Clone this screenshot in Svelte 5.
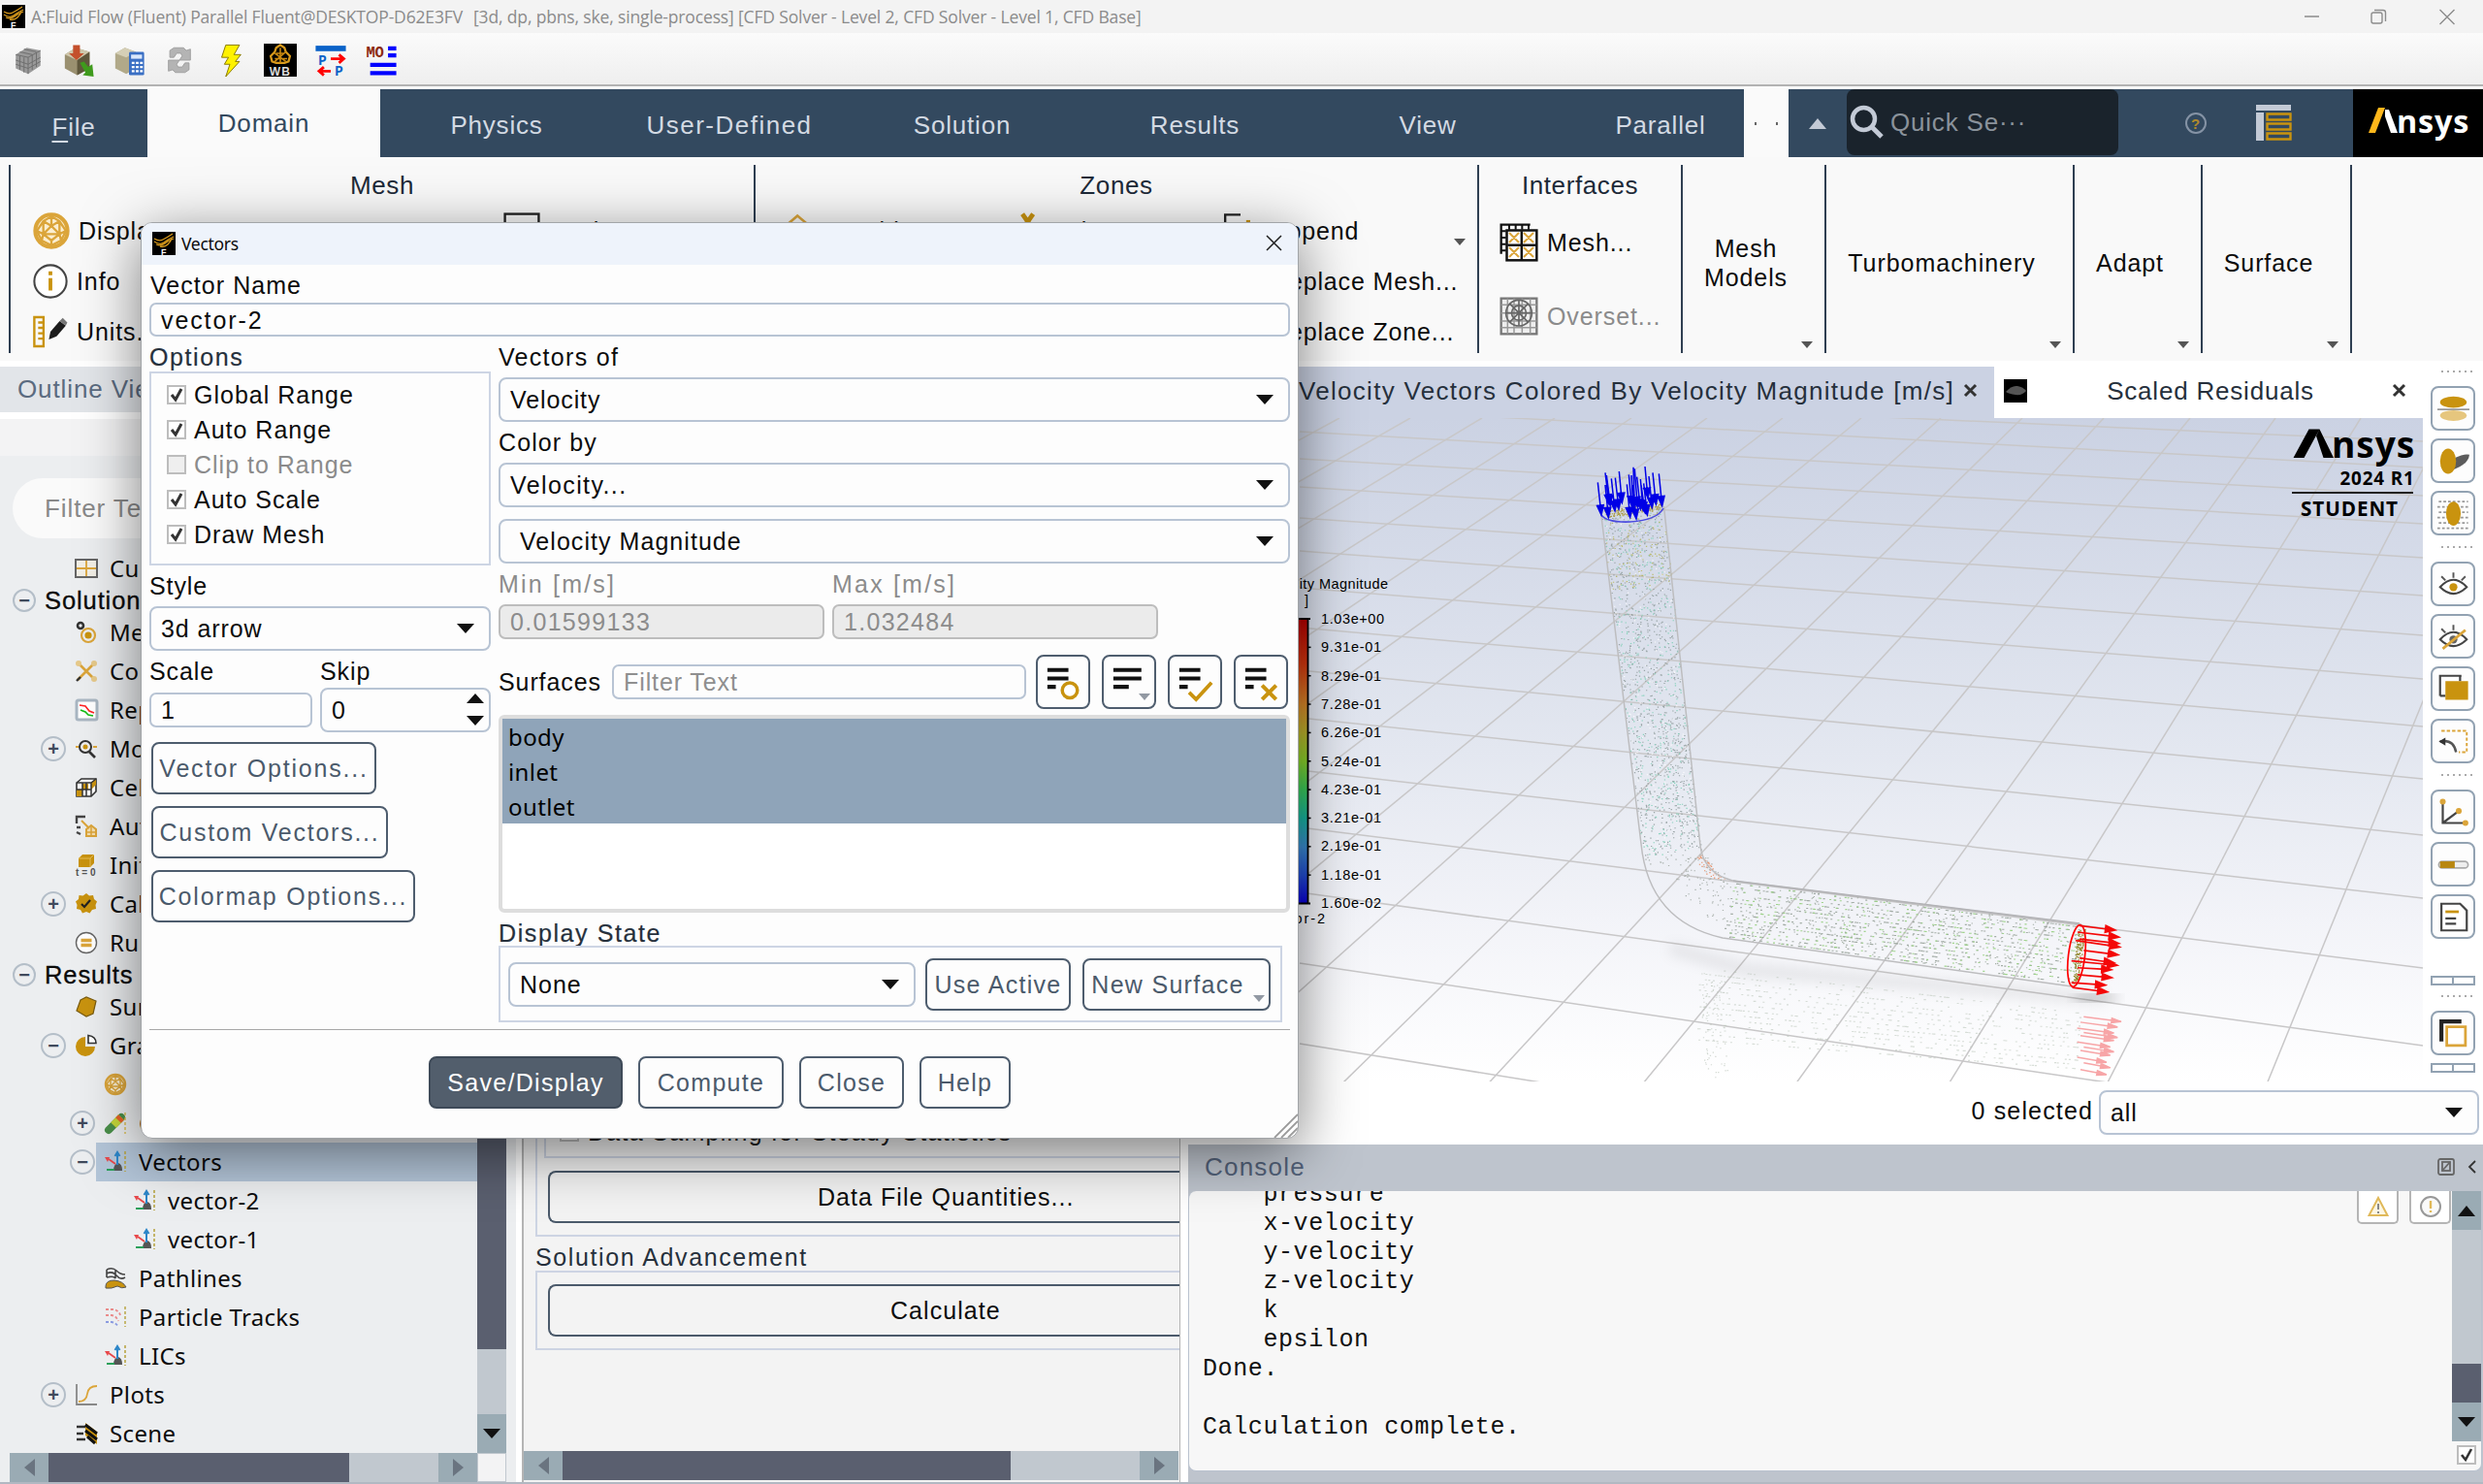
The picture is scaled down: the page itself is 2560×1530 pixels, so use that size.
<script>
  const GOLD = '#c9930f';

  const icons = {
    app: '<rect width="24" height="24" fill="#000"/><path d="M2 7q5 3 9 1t10-6M2 10q6 4 10 1t10-6M4 13q5 2 9-1t9-5M8 15q5 1 8-2t4-6" fill="none" stroke="#d99b1c" stroke-width="1.3"/><text x="9" y="23.5" font-size="9" font-weight="700" fill="#fff" font-family="Liberation Sans">F</text>',
    cubeGrey: '<path d="M3 8L11 3l10 2v11l-9 6-9-4z" fill="#999"/><path d="M3 8l9 2v12M12 10l9-5M3 12l9 3 9-5M3 15l9 3 9-5M6 9v10M9 10v11M15 8v11M18 7v10M6 6l9 2M9 4l9 2" stroke="#6e6e6e" stroke-width=".7" fill="none"/>',
    cubeImport: '<path d="M2 8L10 3l10 3v12l-9 5-9-5z" fill="#9a9070"/><path d="M2 8l9 4 9-6-10-3z" fill="#cfc8ac"/><path d="M11 12v11l9-5V6z" fill="#5f573c"/><path d="M8 1h5v6h3l-5.500 5L5 7h3z" fill="#c4502c"/><path d="M13 14l3-1 3 4 3-2 1 9-8-1 2-2z" fill="#3f9a1c"/>',
    cubeCalc: '<path d="M2 7L9 3l8 3v12l-7 4-8-4z" fill="#b1a989"/><path d="M2 7l8 3 7-4-8-3z" fill="#d5cfb6"/><rect x="12" y="6" width="11" height="17" rx="1" fill="#3a6fc4"/><rect x="13.500" y="8" width="8" height="3" fill="#dbe8fb"/><path d="M14 14h2M17 14h2M20 14h2M14 17h2M17 17h2M20 17h2M14 20h2M17 20h2M20 20h2" stroke="#fff" stroke-width="1.6"/>',
    refresh: '<path d="M5 10V5l3-2h7l2 2 3-1v8h-8l2-3-1-2h-3L8 10zM19 14v5l-3 2H9l-2-2-3 1v-8h8l-2 3 1 2h3l2-3z" fill="#b4b4b4" stroke="#999" stroke-width=".6"/>',
    bolt: '<path d="M9 1h10l-4 7h5l-4 5h3L9 24l3-9H8l3-5H6z" fill="#fff200" stroke="#8a7a00" stroke-width=".7"/>',
    wb: '<rect width="24" height="24" fill="#000"/><path d="M12 1l3 2 1 3 3 3-1 4-3 1h-6l-3-1-1-4 3-3 1-3z" fill="none" stroke="#d99b1c" stroke-width="1.6"/><path d="M9 7h6M8 11h9M12 3v11M8 13l8-7M16 13L8 7" stroke="#c98910" stroke-width="1.100"/><text x="12" y="23.600" text-anchor="middle" font-size="8.500" font-weight="700" fill="#ddd" font-family="Liberation Sans">WB</text>',
    pp: '<path d="M1 3.500h22" stroke="#0a62c8" stroke-width="4"/><text x="3" y="15.500" font-size="10" fill="#0a62c8" font-weight="700" font-family="Liberation Mono">P</text><text x="15" y="23.500" font-size="10" fill="#0a62c8" font-weight="700" font-family="Liberation Mono">P</text><path d="M12 11h9M18 8l3.500 3-3.500 3M12 20H4M7 17l-3.500 3L7 23" stroke="#f00" stroke-width="2" fill="none"/>',
    mo: '<text x="1" y="10" font-size="11" fill="#8b2a10" font-weight="700" font-family="Liberation Mono" textLength="14">MO</text><path d="M17 3.500h6M17 8.500h6M4 15.500h19M4 21.500h19" stroke="#00f" stroke-width="3"/>',
    ball: '<circle cx="12" cy="12" r="10" fill="#fbeed0" stroke="#dba53a" stroke-width="2.400"/><path d="M12 3l5 3 4 6-3 6-6 3-6-3-3-6 4-6zM7 6l5 3 5-3M12 9l-5 5-4-2M12 9l5 5 4-2M7 14l5 4 5-4M12 18v3M7 14H17M12 3v6M7 6v8M17 6v8M6 18l1-4M18 18l-1-4" fill="none" stroke="#dba53a" stroke-width="1.400"/>',
    info: '<circle cx="12" cy="12" r="10.500" fill="#fff" stroke="#444" stroke-width="1.300"/><path d="M12 10v8M12 5.500v2.600" stroke="#c9930f" stroke-width="2.400"/>',
    units: '<path d="M1.500 2.500h6v19h-6zM4 6h4M4 9.500h4M4 13h4M4 16.500h4" fill="none" stroke="#c9930f" stroke-width="1.500"/><path d="M11 17l1-5 6-7 4 3-6 7z" fill="#1c1c1c"/><path d="M18 5l2-2 3 3-1 2z" fill="#777"/>',
    box: '<rect x="1" y="1" width="22" height="22" fill="none" stroke="#222" stroke-width="1.500"/>',
    combine: '<path d="M2 8L10 1l6 5 5 8-9 7z" fill="none" stroke="#dba53a" stroke-width="1.800"/>',
    cross: '<path d="M7 1l7 10M14 1L7 11" stroke="#c9930f" stroke-width="3"/>',
    append: '<path d="M2 22V1.500h10" fill="none" stroke="#222" stroke-width="1.500"/><path d="M17 5v12" stroke="#c9930f" stroke-width="2.600"/>',
    mesh2: '<path d="M1 19V1h18" stroke="#111" stroke-width="1.400" fill="none"/><path d="M1 5h3M1 9h3M1 13h3M1 17h3M6 1v3M10 1v3M14 1v3M18 1v3" stroke="#111" stroke-width="1.200"/><rect x="4.500" y="4.500" width="18.500" height="18.500" fill="#fff" stroke="#111" stroke-width="1.500"/><path d="M6 6l6 6M12 6l-6 6M15 6l6 6M21 6l-6 6M6 15l6 6M12 15l-6 6M15 15l6 6M21 15l-6 6" stroke="#dba53a" stroke-width="1.200"/><path d="M13.700 5v18M5 13.700h18" stroke="#111" stroke-width="1.500"/>',
    overset: '<rect x="1" y="1" width="22" height="22" fill="#eee" stroke="#777" stroke-width="1.400"/><path d="M5 1v22M9 1v22M14 1v22M19 1v22M1 5h22M1 10h22M1 15h22M1 19h22" stroke="#999" stroke-width=".9"/><circle cx="12" cy="10" r="8" fill="none" stroke="#666"/><circle cx="12" cy="10" r="4.500" fill="none" stroke="#666"/><path d="M12 2v16M4 10h16M6 4l12 12M18 4L6 16" stroke="#666"/>',
    table: '<rect x="1" y="3" width="22" height="18" fill="#f2efe6" stroke="#666" stroke-width="2"/><path d="M12 4v16M2 12h20" stroke="#dba53a" stroke-width="1.800"/>',
    methods: '<circle cx="6" cy="5" r="3" fill="none" stroke="#333" stroke-width="2.600"/><circle cx="14" cy="15" r="7" fill="none" stroke="#dba53a" stroke-width="2.200"/><circle cx="14" cy="15" r="3.600" fill="#c9930f"/>',
    controls: '<path d="M3 3l18 18M21 3L3 21" stroke="#dba53a" stroke-width="2.600"/><circle cx="4" cy="4" r="3" fill="#e6c98a"/><circle cx="20" cy="4" r="3" fill="#e6c98a"/><circle cx="20" cy="20" r="3" fill="#e6c98a"/><path d="M2 22l4-4" stroke="#333" stroke-width="2.400"/>',
    report: '<rect x="2" y="2" width="21" height="20" rx="2" fill="#fff" stroke="#a9b6c2" stroke-width="3"/><path d="M5 7l6 1 4 5 5 2" stroke="#f22" fill="none" stroke-width="1.600"/><path d="M6 12l5 2 3 3 5 1" stroke="#1b1" fill="none" stroke-width="1.600"/>',
    monitor: '<circle cx="11" cy="10" r="6" fill="#eee" stroke="#333" stroke-width="2"/><circle cx="11" cy="10" r="2.500" fill="#c9930f"/><path d="M15 15l6 6" stroke="#333" stroke-width="2.600"/><path d="M1 10h3M19 10h4" stroke="#dba53a" stroke-width="2"/>',
    cell: '<path d="M2 7l5-4h15v13l-5 5H2z" fill="#fff" stroke="#333" stroke-width="1.600"/><path d="M8 8h6v6H8zM2 14h6v7H2zM17 7l5-4v6l-5 5z" fill="#c9930f"/><path d="M2 7h15v14M17 7l5-4M8 7v14M2 14h15M12 7v14" stroke="#333" stroke-width="1.500" fill="none"/>',
    auto: '<path d="M2 9V2h9M2 13h4M2 18l4 2" stroke="#444" stroke-width="2.400" fill="none"/><path d="M7 6l8 8M12 15l5-4 5 4v7H12z" stroke="#dba53a" stroke-width="2" fill="#f4dfb0"/><path d="M17 12v10M12 18h10" stroke="#dba53a" stroke-width="1.500"/>',
    init: '<path d="M4 5l4-4h12v9l-4 4H4z" fill="#c9930f"/><path d="M4 5h12l4-4M16 5v9" stroke="#e7bd55" stroke-width="1" fill="none"/><text x="1" y="23" font-size="10" font-weight="700" fill="#555" font-family="Liberation Sans" textLength="21">t=0</text>',
    calc: '<path d="M12 1l3 2.500 4-.5 1 4 3 2.500-1.500 3.500.5 4-4 1-2.500 3.500-3.500-1.500-4 1.500-2-3.500-4-1 .5-4L1 9.500 4 7l.5-4 4 .5z" fill="#c9930f"/><path d="M7 12l3 3 6-7" stroke="#222" stroke-width="2.200" fill="none"/>',
    run: '<circle cx="12" cy="12" r="10.500" fill="#fff" stroke="#666" stroke-width="1.400"/><path d="M6.500 9.500h11M6.500 14.500h11" stroke="#dba53a" stroke-width="3.400"/>',
    surface: '<path d="M6 5l6-3 10 4-3 13-7 3L2 16z" fill="#c9930f" stroke="#7a5c10" stroke-width="1.200"/>',
    graphics: '<path d="M11 3v10h10A10 10 0 1 1 11 3z" fill="#c9930f"/><path d="M14 1.500v8h8q0-7-8-8z" fill="#fff" stroke="#333" stroke-width="1.600"/>',
    contour: '<path d="M5 19L18 6" stroke="#4a8f4a" stroke-width="8" stroke-linecap="round"/><path d="M10 14l8-8" stroke="#c6d83a" stroke-width="8"/><path d="M15 9l3-3" stroke="#e8622a" stroke-width="8"/><path d="M22 1v22" stroke="#d7b840" stroke-width="1.300" stroke-dasharray="3 2"/>',
    vector: '<path d="M10 21q0-7 5-8 4 1 4 8z" fill="#555"/><path d="M14 15V3M11.500 6L14 2l2.500 4" stroke="#2c86c8" stroke-width="2" fill="none"/><path d="M12 14L5 9" stroke="#e8484a" stroke-width="1.800"/><path d="M1 7l5 0-2 5z" fill="#e8484a"/><path d="M11 20H3" stroke="#2aa05a" stroke-width="2"/><path d="M22 1v21" stroke="#b9a646" stroke-width="1.600" stroke-dasharray="3 2"/>',
    path: '<path d="M3 3q6-3 10 1t9 4M3 7q6-3 10 2t9 2M3 11q7-2 9 1M3 3v8M12 4v8" stroke="#444" stroke-width="1.600" fill="none"/><path d="M2 20q0-6 9-6 9 1 12 7-4 2-9-1-6 3-12 2z" fill="#c9930f" stroke="#555"/>',
    particle: '<path d="M2 4h9q5 2 6 6M2 10h6q5 1 7 6" stroke="#e98b8b" stroke-width="1.800" fill="none" stroke-dasharray="3 2"/><path d="M2 17h6q5 1 7 5" stroke="#8b9be0" stroke-width="1.800" fill="none" stroke-dasharray="3 2"/><path d="M22 1v21" stroke="#b9a646" stroke-width="1.500" stroke-dasharray="3 2"/>',
    plots: '<path d="M2 1v21h21" stroke="#888" stroke-width="1.800" fill="none"/><path d="M4 19q8 0 9-8t10-8" stroke="#dba53a" stroke-width="1.800" fill="none"/>',
    scene: '<path d="M2 5h9M2 12h7M2 18h9" stroke="#333" stroke-width="2.600"/><path d="M11 1l12 9v13l-12-9z" fill="#c9930f"/><path d="M11 3l12 9M11 9l12 9M13 15l8 7" stroke="#111" stroke-width="3"/>',
    reflect: '<ellipse cx="12" cy="7" rx="10" ry="4.200" fill="#c9930f"/><path d="M0 12.500h24" stroke="#999" stroke-width="1.300"/><ellipse cx="12" cy="17" rx="10" ry="4" fill="#e6c67e"/>',
    shade: '<path d="M8 14q8-8 16-7-1 8-14 12z" fill="#5c5c5c"/><ellipse cx="8" cy="12" rx="6" ry="9.500" fill="#c9930f"/>',
    glow: '<path d="M1 3h22M0 7h24M1 11h22M0 15h24M1 19h22M0 23h24" stroke="#999" stroke-width="1.200" stroke-dasharray="2 1.500"/><ellipse cx="12" cy="12" rx="5.500" ry="9" fill="#c9930f"/>',
    eye: '<path d="M2 14q10-11 20 0-10 10-20 0z" fill="#fff" stroke="#444" stroke-width="1.500"/><circle cx="12" cy="14" r="3" fill="#c9930f"/><path d="M12 3v4M3 6l3 3M21 6l-3 3" stroke="#555" stroke-width="1.400"/>',
    eyeOff: '<path d="M2 14q10-11 20 0-10 10-20 0z" fill="#fff" stroke="#444" stroke-width="1.500"/><circle cx="12" cy="14" r="3" fill="#666"/><path d="M12 3v4M3 6l3 3" stroke="#555" stroke-width="1.400"/><path d="M4 21L21 7" stroke="#dba53a" stroke-width="2"/>',
    squares: '<path d="M2 17V2h16" fill="none" stroke="#444" stroke-width="1.600"/><path d="M2 17h4M17 2v4" stroke="#444" stroke-width="1.600"/><rect x="6" y="6" width="17" height="14" fill="#c9930f"/>',
    undo: '<path d="M3 4h19v16h-6" fill="none" stroke="#dba53a" stroke-width="1.400" stroke-dasharray="2.500 1.500"/><path d="M2 12q10-2 12 8" fill="none" stroke="#555" stroke-width="1.800"/><path d="M1 12l5-3v6z" fill="#333"/>',
    axes: '<path d="M4 3v17h18M4 20l12-9" fill="none" stroke="#444" stroke-width="1.600"/><circle cx="4" cy="4" r="2.200" fill="#dba53a"/><circle cx="16" cy="11" r="2.200" fill="#dba53a"/><circle cx="21" cy="20" r="2.200" fill="#dba53a"/>',
    bar: '<rect x="1" y="9.500" width="22" height="5" rx="2.500" fill="#eee" stroke="#aaa" stroke-width="1.200"/><path d="M2 12h11" stroke="#b8860f" stroke-width="5"/>',
    page: '<path d="M3 2h14l5 5v15H3z" fill="#fff" stroke="#444" stroke-width="1.600"/><path d="M6 8h10" stroke="#c9930f" stroke-width="2"/><path d="M6 13h8M6 17h8" stroke="#444" stroke-width="1.700"/>',
    copy: '<path d="M3 18V3h15" fill="none" stroke="#222" stroke-width="3"/><rect x="7" y="7" width="14" height="14" fill="#fff" stroke="#dba53a" stroke-width="2"/>',
    selAll: '<path d="M2 4h15M2 10h15M2 16h6" stroke="#111" stroke-width="2.800"/><circle cx="18" cy="18.500" r="5.400" fill="#fff" stroke="#c9930f" stroke-width="2.400"/>',
    selList: '<path d="M2 4h20M2 10h20M2 16h11" stroke="#111" stroke-width="2.800"/>',
    selCheck: '<path d="M2 4h15M2 10h15M2 16h6" stroke="#111" stroke-width="2.800"/><path d="M9 20l5 5L25 13" fill="none" stroke="#c9930f" stroke-width="2.600"/>',
    selClear: '<path d="M2 4h15M2 10h15M2 16h6" stroke="#111" stroke-width="2.800"/><path d="M14 15l10 10M24 15L14 25" fill="none" stroke="#c9930f" stroke-width="2.800"/>'
  };

  const quickTools = ['cubeGrey', 'cubeImport', 'cubeCalc', 'refresh', 'bolt', 'wb', 'pp', 'mo'];
  const tabs = ['Domain', 'Physics', 'User-Defined', 'Solution', 'Results', 'View'];

  const tree = [
    { t: 'Current Simulation', l: 1, i: 'table' },
    { t: 'Solution', section: true },
    { t: 'Methods', l: 1, i: 'methods' },
    { t: 'Controls', l: 1, i: 'controls' },
    { t: 'Report Definitions', l: 1, i: 'report' },
    { t: 'Monitors', l: 1, i: 'monitor', e: '+' },
    { t: 'Cell Registers', l: 1, i: 'cell' },
    { t: 'Automatic Mesh', l: 1, i: 'auto' },
    { t: 'Initialization', l: 1, i: 'init' },
    { t: 'Calculation Activities', l: 1, i: 'calc', e: '+' },
    { t: 'Run Calculation', l: 1, i: 'run' },
    { t: 'Results', section: true },
    { t: 'Surfaces', l: 1, i: 'surface' },
    { t: 'Graphics', l: 1, i: 'graphics', e: '−' },
    { t: 'Mesh', l: 2, i: 'ball' },
    { t: 'Contours', l: 2, i: 'contour', e: '+' },
    { t: 'Vectors', l: 2, i: 'vector', e: '−', sel: true },
    { t: 'vector-2', l: 3, i: 'vector' },
    { t: 'vector-1', l: 3, i: 'vector' },
    { t: 'Pathlines', l: 2, i: 'path' },
    { t: 'Particle Tracks', l: 2, i: 'particle' },
    { t: 'LICs', l: 2, i: 'vector' },
    { t: 'Plots', l: 1, i: 'plots', e: '+' },
    { t: 'Scene', l: 1, i: 'scene' }
  ];

  const options = [
    ['Global Range', true], ['Auto Range', true], ['Clip to Range', false], ['Auto Scale', true], ['Draw Mesh', true]
  ];

  const consoleText = `    pressure
    x-velocity
    y-velocity
    z-velocity
    k
    epsilon
Done.

Calculation complete.`;

  const sideTools = [
    ['reflect', 'shade', 'glow'],
    ['eye', 'eyeOff', 'squares', 'undo'],
    ['axes', 'bar', 'page']
  ];

  // Ground plane: one family converges on a vanishing point, the other is given by its edge heights.
  const vp = [2970, -435];
  const topX = [1308, 1381, 1454, 1528, 1603, 1682, 1760, 1838, 1919, 2001, 2085, 2169, 2258, 2346, 2434, 2525, 2617];
  const rays = topX.map((x) => [x, 431, x + ((x - vp[0]) * 700) / 866, 1131]);
  const rows = [[403, 455], [419, 482], [445, 511], [473, 540], [502, 575], [534, 614], [568, 655], [606, 700], [647, 749], [691, 803], [740, 861], [794, 926], [853, 998], [920, 1078], [993, 1164], [1076, 1262]];

  const levels = ['1.03e+00', '9.31e-01', '8.29e-01', '7.28e-01', '6.26e-01', '5.24e-01', '4.23e-01', '3.21e-01', '2.19e-01', '1.18e-01', '1.60e-02'];

  const inletArrows = [
    [82, 82, 93, 183], [105, 52, 117, 150], [105, 90, 115, 190], [124, 70, 135, 170], [148, 48, 157, 145], [136, 68, 147, 165],
    [109, 60, 121, 152], [172, 88, 182, 190], [178, 58, 187, 155], [192, 35, 196, 160], [186, 60, 192, 165], [203, 65, 214, 165],
    [214, 72, 222, 168], [190, 90, 201, 195], [228, 33, 237, 130], [224, 85, 235, 183], [240, 63, 250, 160], [252, 52, 262, 150],
    [271, 55, 281, 155], [196, 40, 205, 158], [216, 90, 228, 175]
  ].map(([a, b, c, d]) => [1620 + a / 3, 470 + b / 3, 1620 + c / 3, 470 + d / 3]);

  const outletArrows = [
    [580, 1165, 667, 1174], [575, 1178, 676, 1188], [570, 1195, 678, 1208], [590, 1215, 674, 1224], [560, 1236, 672, 1245],
    [575, 1250, 658, 1254], [575, 1264, 659, 1270], [560, 1280, 643, 1285], [562, 1290, 648, 1299], [580, 1192, 676, 1201], [580, 1230, 664, 1240]
  ].map(([a, b, c, d]) => [1900 + a / 2.376, 360 + b / 1.96, 1900 + c / 2.376, 360 + d / 1.96]);

  const mirrorArrows = [1355, 1366, 1378, 1387, 1393, 1406, 1416, 1423, 1437, 1448, 1462].map((y, i) => [
    1900 + (590 - (i % 3) * 8) / 2.376, 360 + (y - 6) / 1.96, 1900 + (682 - (i * 3) - (i % 3) * 6) / 2.376, 360 + (y + 4) / 1.96
  ]);

  function arrowPath(list, w) {
    return list.map(([x1, y1, x2, y2]) => {
      const len = Math.hypot(x2 - x1, y2 - y1);
      const ux = (x2 - x1) / len;
      const uy = (y2 - y1) / len;
      const bx = x2 - ux * 10;
      const by = y2 - uy * 10;
      return `M${x1} ${y1}L${bx} ${by}M${x2} ${y2}L${bx - uy * w} ${by + ux * w}L${bx + uy * w} ${by - ux * w}Z`;
    }).join('');
  }

  let seed = 7;
  const rnd = () => (seed = (seed * 16807) % 2147483647) / 2147483647;

  // Speckles on a quad given by its two long edges.
  function speckle(a, b, c, d, n, stripes) {
    let p = '';
    for (let k = 0; k < n; k++) {
      const t = rnd();
      let u = rnd();
      if (stripes) u = (Math.floor(u * stripes) + 0.5) / stripes;
      const x0 = a[0] + (b[0] - a[0]) * t, y0 = a[1] + (b[1] - a[1]) * t;
      const x1 = c[0] + (d[0] - c[0]) * t, y1 = c[1] + (d[1] - c[1]) * t;
      p += `M${(x0 + (x1 - x0) * u).toFixed(1)} ${(y0 + (y1 - y0) * u).toFixed(1)}h${stripes ? 2 : 1.3}`;
    }
    return p;
  }
  const V = [[1651, 534], [1694, 884], [1715, 524], [1754, 876]];
  const H = [[1787, 909], [2146, 954], [1776, 967], [2136, 1016]];
  const E = [[1694, 884], [1776, 966], [1754, 878], [1787, 909]];
  const R = [[1750, 995], [2148, 1043], [1750, 1075], [2140, 1104]];
  const dots = [
    [speckle(...V, 1000), '#8d9a9a', 0.85], [speckle(...V, 420), '#7fd0b8', 0.9], [speckle(...V, 200), '#fff', 0.8],
    [speckle([1651, 534], [1661, 610], [1715, 524], [1724, 600], 130), '#b9b860', 0.9],
    [speckle(...H, 700, 15), '#8f9a90', 0.8], [speckle(...H, 380, 15), '#96cf80', 0.9], [speckle(...H, 300), '#93a093', 0.8],
    [speckle(...E, 100), '#9aa39c', 0.8], [speckle([1744, 880], [1762, 906], [1755, 882], [1782, 908], 40), '#e8875a', 0.9],
    [speckle(...R, 700, 14), '#b8c2b6', 0.55], [speckle([1752, 1000], [1758, 1112], [1776, 1010], [1782, 1112], 90), '#b8c2b6', 0.6],
    [speckle([1653, 527], [1712, 518], [1655, 534], [1714, 526], 150), '#a8983c', 1],
    [speckle([2143, 956], [2136, 1014], [2150, 958], [2142, 1014], 150), '#8c7f1c', 1]
  ];
</script>

{#snippet icon(name, size)}
  <svg class="ico" width={size} height={size} viewBox="0 0 24 24">{@html icons[name]}</svg>
{/snippet}

{#snippet caret()}
  <svg class="ico" width="20" height="12" viewBox="0 0 20 12"><path d="M1 1h18l-9 10z" fill="#111" /></svg>
{/snippet}

{#snippet smallCaret()}
  <svg class="ico small" width="12" height="7" viewBox="0 0 12 7"><path d="M0 0h12L6 7z" fill="#555" /></svg>
{/snippet}

{#snippet combo(text)}
  <div class="combo"><span>{text}</span>{@render caret()}</div>
{/snippet}

<div class="app">
  <header class="title">
    {@render icon('app', 24)}
    <span class="title-a">A:Fluid Flow (Fluent) Parallel Fluent@DESKTOP-D62E3FV</span>
    <span class="title-b">[3d, dp, pbns, ske, single-process] [CFD Solver - Level 2, CFD Solver - Level 1, CFD Base]</span>
    <svg class="winctl" width="160" height="20" viewBox="0 0 160 20" fill="none" stroke="#8c8c8c" stroke-width="1.4">
      <path d="M1 10h15M140.500 3l15 15M155.500 3l-15 15" />
      <rect x="70" y="6" width="11" height="11" rx="2" /><path d="M73 3.500h9q2.500 0 2.500 2.500v9" />
    </svg>
  </header>

  <div class="quick">
    {#each quickTools as q}<span class="quick-cell">{@render icon(q, 34)}</span>{/each}
  </div>

  <nav class="tabs">
    <span class="tab file"><u>F</u>ile</span>
    {#each tabs as t, i}<span class="tab" class:active={i === 0} class:wider={t.includes('-')}>{t}</span>{/each}
    <span class="tab last">Parallel</span>
    <span class="tab-gap"><i></i><i></i></span>
    <span class="tab-tools">
      <svg class="up" width="18" height="11" viewBox="0 0 18 11"><path d="M0 11h18L9 0z" fill="#c3cad6" /></svg>
      <span class="search">
        <svg width="36" height="36" viewBox="0 0 36 36" fill="none" stroke="#c3cad6"><circle cx="14.500" cy="14.500" r="11.500" stroke-width="4.500" /><path d="M23 23l10 10" stroke-width="5" /></svg>
        <span>Quick Se···</span>
      </span>
      <svg class="help" width="24" height="24" viewBox="0 0 24 24"><circle cx="12" cy="12" r="10" fill="none" stroke="#8593a5" stroke-width="2" /><text x="12" y="17.500" text-anchor="middle" font-size="15" font-weight="700" fill="#b08a2c" font-family="Liberation Sans">?</text></svg>
      <svg class="layout" width="38" height="38" viewBox="0 0 38 38"><path d="M1 4h36" stroke="#c3cad6" stroke-width="6" /><path d="M5 9v29" stroke="#c3cad6" stroke-width="8" /><path d="M12.500 10.500h24v6h-24zM12.500 20.500h24v6h-24zM12.500 30.500h24v6h-24z" fill="none" stroke={GOLD} stroke-width="2.400" /></svg>
    </span>
    <span class="brand">
      <svg width="110" height="46" viewBox="0 -5 110 46"><path d="M0 28L10 2h7L7 28z" fill="#ffb71b" /><path d="M17 4l4 0 9 24h-7l-6-17z" fill="#fff" /><text x="29" y="28" font-size="33" font-weight="700" fill="#fff" font-family="Open Sans, sans-serif" textLength="75" lengthAdjust="spacingAndGlyphs">nsys</text></svg>
    </span>
  </nav>

  <div class="ribbon">
    <section class="group mesh">
      <h3>Mesh</h3>
      <div class="cols">
        <div class="col first">
          <span class="cmd">{@render icon('ball', 40)}Display...</span>
          <span class="cmd">{@render icon('info', 38)}Info</span>
          <span class="cmd">{@render icon('units', 38)}Units...</span>
        </div>
        <div class="col"><span class="cmd">{@render icon('box', 38)}Scale...</span></div>
      </div>
    </section>
    <section class="group zones">
      <h3>Zones</h3>
      <div class="cols">
        <div class="col c1"><span class="cmd">{@render icon('combine', 34)}Combine</span></div>
        <div class="col c2"><span class="cmd">{@render icon('cross', 38)}Delete...</span></div>
        <div class="col c3">
          <span class="cmd">{@render icon('append', 38)}Append</span>
          <span class="cmd">{@render icon('append', 38)}Replace Mesh...</span>
          <span class="cmd">{@render icon('append', 38)}Replace Zone...</span>
        </div>
        <span class="drop">{@render smallCaret()}</span>
      </div>
    </section>
    <section class="group inter">
      <h3>Interfaces</h3>
      <span class="cmd">{@render icon('mesh2', 40)}Mesh...</span>
      <span class="cmd off">{@render icon('overset', 40)}Overset...</span>
    </section>
    <section class="group plain g1"><p>Mesh<br />Models</p>{@render smallCaret()}</section>
    <section class="group plain g2"><p>Turbomachinery</p>{@render smallCaret()}</section>
    <section class="group plain g3"><p>Adapt</p>{@render smallCaret()}</section>
    <section class="group plain g4"><p>Surface</p>{@render smallCaret()}</section>
    <section class="group rest"></section>
  </div>

  <main class="main">
    <aside class="outline">
      <div class="panel-head">Outline View</div>
      <div class="strip"></div>
      <div class="outline-body">
        <div class="tree-col">
          <div class="filter">Filter Text</div>
          <div class="tree">
            {#each tree as n}
              {#if n.section}
                <div class="node section"><b class="exp">−</b><span>{n.t}</span></div>
              {:else}
                <div class="node level{n.l}">
                  {#if n.e}<b class="exp">{n.e}</b>{:else}<b class="exp none"></b>{/if}
                  <span class="leaf" class:sel={n.sel}>{@render icon(n.i, 24)}<span>{n.t}</span></span>
                </div>
              {/if}
            {/each}
          </div>
          <div class="hbar">
            <i class="btn"><svg width="11" height="18" viewBox="0 0 11 18"><path d="M11 0v18L0 9z" fill="#6a7480" /></svg></i><i class="thumb"></i><i class="track"></i><i class="btn"><svg width="11" height="18" viewBox="0 0 11 18"><path d="M0 0v18l11-9z" fill="#6a7480" /></svg></i>
          </div>
        </div>
        <div class="vbar"><i class="thumb"></i><i class="track"></i><i class="btn">{@render caret()}</i><i class="corner"></i></div>
      </div>
    </aside>

    <section class="task">
      <div class="task-body">
        <div class="frame upper">
          <div class="frame sampling"><i class="cb blank"></i><span>Data Sampling for Steady Statistics</span></div>
          <div class="wide">Data File Quantities...</div>
        </div>
        <h4>Solution Advancement</h4>
        <div class="frame lower"><div class="wide">Calculate</div></div>
      </div>
      <div class="hbar task-bar">
        <i class="btn"><svg width="11" height="18" viewBox="0 0 11 18"><path d="M11 0v18L0 9z" fill="#6a7480" /></svg></i><i class="thumb"></i><i class="track"></i><i class="btn"><svg width="11" height="18" viewBox="0 0 11 18"><path d="M0 0v18l11-9z" fill="#6a7480" /></svg></i>
      </div>
    </section>

    <section class="right">
      <div class="gfx">
        <div class="view">
          <div class="doc-tabs">
            <div class="doc on"><span>Velocity Vectors Colored By Velocity Magnitude [m/s]</span><svg width="15" height="15" viewBox="0 0 15 15"><path d="M2 2l11 11M13 2L2 13" stroke="#333" stroke-width="3" /></svg></div>
            <div class="doc"><svg width="24" height="24" viewBox="0 0 24 24"><rect width="24" height="24" /><path d="M2 13q6-7 12-6t9 5q-4 5-11 4t-10-3z" fill="#555" /></svg><span>Scaled Residuals</span><svg width="15" height="15" viewBox="0 0 15 15"><path d="M2 2l11 11M13 2L2 13" stroke="#333" stroke-width="3" /></svg></div>
          </div>
          <svg class="canvas" width="1273" height="684" viewBox="1225 431 1273 684">
            <defs>
              <linearGradient id="sky" x1="0" y1="0" x2="0" y2="1"><stop offset="0" stop-color="#cbd2e3" /><stop offset=".5" stop-color="#e3e7f0" /><stop offset=".75" stop-color="#f2f3f8" /><stop offset="1" stop-color="#fff" /></linearGradient>
              <linearGradient id="map" x1="0" y1="0" x2="0" y2="1"><stop offset="0" stop-color="#b80000" /><stop offset=".16" stop-color="#d83a10" /><stop offset=".3" stop-color="#dd8a2a" /><stop offset=".4" stop-color="#c0b62e" /><stop offset=".5" stop-color="#8cd62c" /><stop offset=".6" stop-color="#3ccf5e" /><stop offset=".7" stop-color="#18b8a4" /><stop offset=".8" stop-color="#3c8fd4" /><stop offset=".9" stop-color="#2450d8" /><stop offset="1" stop-color="#0a00dc" /></linearGradient>
              <filter id="soft" x="-20%" y="-200%" width="140%" height="500%"><feGaussianBlur stdDeviation="7" /></filter>
            </defs>
            <rect x="1225" y="431" width="1273" height="684" fill="url(#sky)" />
            <g stroke="#c8c7c8" stroke-width="1.500">
              {#each rays as r}<line x1={r[0]} y1={r[1]} x2={r[2]} y2={r[3]} />{/each}
              {#each rows as r}<line x1="1340" y1={r[0]} x2="2498" y2={r[1]} />{/each}
            </g>
            <path d="M1722 978L1800 1000L2170 1030" stroke="#000" stroke-opacity=".1" stroke-width="9" fill="none" filter="url(#soft)" />
            <path d="M2140 1030L2182 1028" stroke="#000" stroke-opacity=".14" stroke-width="16" fill="none" filter="url(#soft)" />
            {#each dots as d}<path d={d[0]} stroke={d[1]} stroke-width="1.100" opacity={d[2]} fill="none" />{/each}
            <path d="M1651 532L1692 870Q1700 950 1776 967L2136 1017M1715.500 522L1753 872Q1757 903 1792 909L2146 953" fill="none" stroke="#bdbdbf" stroke-width="1.500" />
            <path d="M1787 908L2144 952" stroke="#b3b3b6" stroke-width="1.600" />
            <path d="M1651 531q6 8 30 7 28-2 34-14" fill="none" stroke="#4a4ae0" stroke-width="1.600" />
            <path d={arrowPath(inletArrows, 3.4)} fill="#0000e6" stroke="#0000e6" stroke-width="1.500" />
            <ellipse cx="2141" cy="985.500" rx="8.500" ry="32" transform="rotate(7 2141 985.500)" fill="none" stroke="#f00" stroke-width="1.700" />
            <path d={arrowPath(outletArrows, 3.4)} fill="#f40808" stroke="#f40808" stroke-width="1.700" />
            <path d={arrowPath(mirrorArrows, 2.4)} fill="#f7a5a7" stroke="#f7a5a7" stroke-width="1.500" />
            <rect x="1326" y="638" width="22.500" height="293.500" fill="url(#map)" />
            <path d="M1326 638h25M1326 931.500h25M1348.500 638v293.500" stroke="#000" stroke-width="1.800" />
            <g font-family="Liberation Sans" font-size="14.500" fill="#000">
              <text x="1302" y="607" textLength="130">Velocity Magnitude</text>
              <text x="1302" y="624" textLength="48">[ m/s ]</text>
              {#each levels as l, i}
                {#if i > 0 && i < 10}<path d="M1348 {638 + i * 29.35}h3.500" stroke="#000" stroke-width="1.500" />{/if}
                <text x="1362" y={643 + i * 29.3} textLength={i ? 63 : 66}>{l}</text>
              {/each}
              <text x="1300" y="952" textLength="67">vector-2</text>
            </g>
            <path d="M2364.500 472.500L2380.500 443h11L2375.500 472.500zM2388 450l3.500-7 14.500 29.500h-10.500z" fill="#000" transform="translate(0 -.5)" />
            <g font-family="Open Sans, sans-serif" font-weight="700" fill="#000">
              <text x="2404" y="472" font-size="38" textLength="86" lengthAdjust="spacingAndGlyphs">nsys</text>
              <text x="2412.500" y="499.500" font-size="20" textLength="77" lengthAdjust="spacingAndGlyphs">2024 R1</text>
              <text x="2372" y="532" font-size="20.500" textLength="101" lengthAdjust="spacingAndGlyphs">STUDENT</text>
            </g>
            <path d="M2363 508h125" stroke="#222" stroke-width="2" />
          </svg>
          <div class="selected"><span>0 selected</span></div>
        </div>
        <div class="side">
          {#each sideTools as g}
            <i class="grip"></i>
            {#each g as s}<span class="side-btn">{@render icon(s, 33)}</span>{/each}
          {/each}
          <i class="split gap"></i>
          <i class="grip tight"></i>
          <span class="side-btn">{@render icon('copy', 33)}</span>
          <i class="split"></i>
        </div>
        <div class="all">{@render combo('all')}</div>
      </div>

      <div class="console">
        <div class="console-head"><span>Console</span>
          <svg width="46" height="22" viewBox="0 0 46 22" fill="none" stroke="#666" stroke-width="1.800"><rect x="4" y="3" width="16" height="16" rx="2" /><rect x="8" y="6" width="8" height="9" /><path d="M8 15l8-9" /><path d="M42 5l-6 6 6 6" stroke="#333" /></svg>
        </div>
        <div class="console-body">
          <pre>{consoleText}</pre>
          <div class="badges">
            <span><svg width="22" height="24" viewBox="0 0 22 24"><path d="M11 3l9.500 18h-19z" fill="#fdf6e2" stroke="#e0b95a" stroke-width="2" /><path d="M11 9v6M11 17v2" stroke="#888" stroke-width="2" /></svg></span>
            <span><svg width="24" height="24" viewBox="0 0 24 24"><circle cx="12" cy="12" r="10" fill="#fafafa" stroke="#999" stroke-width="2" /><path d="M12 6v8M12 16v2" stroke="#e0b95a" stroke-width="2.400" /></svg></span>
          </div>
          <div class="console-side">
            <i class="btn"><svg width="18" height="11" viewBox="0 0 18 11"><path d="M0 11h18L9 0z" fill="#111" /></svg></i><i class="track t1"></i><i class="thumb"></i><i class="btn">{@render caret()}</i>
            <i class="cb"><svg width="16" height="16" viewBox="0 0 16 16"><path d="M3 8l4 5 6-11" fill="none" stroke="#333" stroke-width="2.600" /></svg></i>
          </div>
        </div>
      </div>
    </section>
  </main>

  <div class="dialog">
    <div class="dialog-title">{@render icon('app', 24)}<span>Vectors</span>
      <svg width="17" height="17" viewBox="0 0 17 17"><path d="M1 1l15 15M16 1L1 16" stroke="#222" stroke-width="1.500" /></svg>
    </div>
    <div class="dialog-body">
      <div class="lbl name">Vector Name</div>
      <div class="field name-field">vector-2</div>
      <div class="split-cols">
        <div class="left">
          <div class="lbl head opt">Options</div>
          <div class="optbox">
            {#each options as [t, on]}
              <div class="check" class:off={!on}><i class="cb">{#if on}<svg width="16" height="16" viewBox="0 0 16 16"><path d="M3 8l4 5 6-11" fill="none" stroke="#333" stroke-width="3" /></svg>{/if}</i><span>{t}</span></div>
            {/each}
          </div>
          <div class="lbl mid">Style</div>
          {@render combo('3d arrow')}
          <div class="pair"><span class="lbl">Scale</span><span class="lbl">Skip</span></div>
          <div class="pair inputs">
            <div class="field">1</div>
            <div class="spin"><span>0</span><svg width="18" height="36" viewBox="0 0 18 36"><path d="M0 11h18L9 1zM0 24h18l-9 10z" fill="#111" /></svg></div>
          </div>
          <button class="b1">Vector Options...</button>
          <button class="b2">Custom Vectors...</button>
          <button class="b3">Colormap Options...</button>
        </div>
        <div class="rightcol">
          <div class="lbl vo">Vectors of</div>
          {@render combo('Velocity')}
          <div class="lbl mid2">Color by</div>
          <div class="group-combo">{@render combo('Velocity...')}</div>
          <div class="inset">{@render combo('Velocity Magnitude')}</div>
          <div class="minmax"><span>Min [m/s]</span><span>Max [m/s]</span></div>
          <div class="minmax fields"><div class="field dis">0.01599133</div><div class="field dis">1.032484</div></div>
          <div class="surf">
            <span class="lbl">Surfaces</span>
            <div class="field ph">Filter Text</div>
            {#each ['selAll', 'selList', 'selCheck', 'selClear'] as s}
              <span class="sel-btn"><svg width="39" height="39" viewBox="0 0 27 27">{@html icons[s]}</svg>{#if s === 'selList'}<svg class="tick" width="12" height="7" viewBox="0 0 12 7"><path d="M0 0h12L6 7z" fill="#9299a3" /></svg>{/if}</span>
            {/each}
          </div>
          <div class="list"><div>body</div><div>inlet</div><div>outlet</div></div>
          <div class="lbl head ds">Display State</div>
          <div class="dsbox">
            {@render combo('None')}
            <button>Use Active</button>
            <button class="ns">New Surface<svg class="tick" width="12" height="7" viewBox="0 0 12 7"><path d="M0 0h12L6 7z" fill="#9299a3" /></svg></button>
          </div>
        </div>
      </div>
      <div class="actions">
        <button class="primary">Save/Display</button><button class="w2">Compute</button><button class="w3">Close</button><button class="w4">Help</button>
      </div>
    </div>
    <svg class="resize" width="26" height="26" viewBox="0 0 26 26"><path d="M2 26L26 2M9 26L26 9M16 26l10-10" stroke="#9a9a9a" stroke-width="1.800" /></svg>
  </div>
</div>

<style>
  :global(body) { margin: 0; background: #fff; }
  .app { position: relative; width: 2560px; height: 1530px; overflow: hidden; display: flex; flex-direction: column; background: #fff; font: 25px/30px 'Liberation Sans', Arial, sans-serif; letter-spacing: 0.9px; color: #0c0c0c; }
  .app :global(*) { box-sizing: border-box; }
  .ico { flex: none; display: block; overflow: visible; }
  i { display: block; font-style: normal; }

  .title { height: 34px; background: #f3f3f3; display: flex; align-items: center; padding-left: 2px; font: 17.5px/34px 'Open Sans', 'Noto Sans', sans-serif; letter-spacing: -0.15px; color: #8b8b8b; white-space: pre; }
  .title-a { margin-left: 6px; width: 456px; }
  .winctl { margin-left: auto; margin-right: 25px; }
  .quick { height: 58px; padding: 0 0 3px 3px; display: flex; align-items: center; background: linear-gradient(#fbfbfb, #efefef 51px, #efefef 53px, #b2b2b2 53px, #b2b2b2 55px, #fafafa 55px); }
  .quick-cell { width: 52px; display: flex; justify-content: center; }

  .tabs { height: 70px; display: flex; background: #33495f; color: #d3dae3; font-size: 26px; letter-spacing: 0.8px; }
  .tab { width: 240px; flex: none; display: flex; align-items: center; justify-content: center; padding-top: 3px; }
  .tab.wider { letter-spacing: 1.5px; }
  .tab.file { width: 152px; padding-top: 7px; text-underline-offset: 5px; }
  .tab.active { background: #fafafa; color: #33495f; padding-top: 0; }
  .tab.last { width: 206px; padding-left: 34px; }
  .tab-gap { width: 46px; background: #fafafa; display: flex; gap: 20px; align-items: center; justify-content: center; }
  .tab-gap i { width: 2px; height: 3px; background: #666; }
  .tab-tools { width: 582px; display: flex; align-items: center; }
  .up { margin: 0 21px 0 21px; }
  .search { width: 280px; height: 68px; align-self: flex-start; background: #1a232c; border-radius: 8px; display: flex; align-items: center; padding-left: 3px; gap: 6px; color: #8a929b; font-size: 26px; }
  .help { margin-left: 68px; }
  .layout { margin-left: 49px; margin-top: -2px; }
  .brand { flex: 1; background: #000; display: flex; align-items: center; padding-left: 16px; }
  .brand svg { overflow: visible; }

  .ribbon { height: 210px; background: #f9f9f9; display: flex; padding: 8px 0 0 9px; }
  .group { height: 194px; border-left: 2px solid #2f3f52; display: flex; flex-direction: column; }
  h3 { margin: 0; height: 42px; line-height: 42px; font-size: 26px; font-weight: 400; text-align: center; color: #1d2a38; letter-spacing: 0.6px; }
  .mesh { width: 768px; } .zones { width: 746px; } .inter { width: 210px; }
  .g1 { width: 148px; } .g2 { width: 256px; } .g3 { width: 132px; } .g4 { width: 154px; } .rest { width: 10px; }
  .cols { display: flex; position: relative; }
  .col { display: flex; flex-direction: column; }
  .cmd { height: 52px; display: flex; align-items: center; gap: 9px; white-space: nowrap; }
  .first { width: 508px; padding-left: 22px; }
  .first .cmd { gap: 8px; }
  .c1 { width: 246px; padding-left: 29px; } .c2 { width: 235px; padding-left: 18px; } .c3 { width: 236px; }
  .c3 .cmd { letter-spacing: 0.85px; gap: 12px; }
  .c2 .cmd { gap: 0; }
  .drop { margin-top: 34px; margin-left: 3px; }
  .inter .cmd { height: 80px; padding-left: 21px; }
  .off { color: #8b8b8b; }
  .plain { align-items: flex-end; justify-content: flex-end; padding: 0 12px 5px 0; }
  .plain p { margin: 0; flex: 1; align-self: stretch; display: grid; place-content: center; text-align: center; padding-top: 20px; margin-right: 4px; }
  .g2 p { margin-right: 0; padding-right: 4px; letter-spacing: 1px; }

  .main { flex: 1; display: flex; padding-top: 6px; border-bottom: 2px solid #b1b8c2; min-height: 0; }
  .outline { width: 532px; flex: none; display: flex; flex-direction: column; background: #eceef0; }
  .panel-head { height: 47px; background: #e2e5e9; padding-left: 18px; line-height: 46px; font-size: 26px; color: #5b6b80; }
  .strip { height: 45px; border-top: 7px solid #fff; background: #f3f3f4; }
  .outline-body { flex: 1; display: flex; min-height: 0; }
  .tree-col { width: 492px; display: flex; flex-direction: column; }
  .filter { margin: 23px 0 11px 13px; width: 470px; height: 62px; border-radius: 31px; background: #fafafa; padding-left: 33px; line-height: 63px; font-size: 26px; color: #898989; flex: none; }
  .tree { flex: 1; font: 24px/40px 'Noto Sans', sans-serif; letter-spacing: 0.35px; overflow: hidden; }
  .node { height: 40px; display: flex; align-items: center; white-space: nowrap; }
  .section { height: 26px; padding-left: 13px; gap: 9px; font: 25.5px/26px 'Liberation Sans', sans-serif; letter-spacing: 0.9px; -webkit-text-stroke: 0.3px #000; }
  .level1 { padding-left: 42px; } .level2 { padding-left: 72px; } .level3 { padding-left: 102px; }
  .exp { width: 26px; height: 26px; flex: none; border: 2px solid #b4bec8; border-radius: 50%; display: grid; place-content: center; font: 700 20px/20px 'Liberation Sans', sans-serif; letter-spacing: 0; color: #3f4a5c; }
  .exp.none { border: 0; }
  .section .exp { width: 24px; height: 24px; -webkit-text-stroke: 0; }
  .leaf { flex: 1; height: 40px; display: flex; align-items: center; gap: 12px; padding-left: 8px; margin-left: 1px; }
  .sel { background: #b3c5d8; }
  .hbar { height: 30px; margin-left: 10px; display: flex; flex: none; }
  .btn { width: 40px; height: 30px; background: #9aabb4; display: grid; place-content: center; flex: none; }
  .thumb { background: #5a5f6f; } .track { background: #c1c8cf; }
  .hbar .thumb { width: 310px; } .hbar .track { flex: 1; }
  .vbar { width: 30px; display: flex; flex-direction: column; }
  .vbar .thumb { height: 921px; } .vbar .track { flex: 1; }
  .vbar .btn, .console-side .btn { width: 30px; height: 40px; }
  .corner { height: 30px; border: 1px solid #c1c8cf; background: #f3f3f4; }

  .task { width: 679px; flex: none; margin-left: 6px; border: 1px solid #b4b4b4; border-width: 0 1px 0 2px; background: #f3f3f3; display: flex; flex-direction: column; }
  .task-body { flex: 1; padding-left: 12px; display: flex; flex-direction: column; }
  .frame { border: 2px solid #cdd4e3; border-right: 0; }
  .upper { height: 897px; display: flex; flex-direction: column; justify-content: flex-end; padding: 0 0 12px 7px; border-top: 0; }
  .sampling { height: 52px; border-top: 0; display: flex; align-items: center; gap: 9px; padding-left: 14px; margin-bottom: 13px; letter-spacing: 1.3px; color: #222; white-space: nowrap; }
  .wide { height: 54px; border: 2px solid #4b5a6b; border-right: 0; border-radius: 8px 0 0 8px; line-height: 50px; padding-left: 276px; white-space: nowrap; letter-spacing: 1.05px; }
  .sampling + .wide { margin-left: 4px; }
  h4 { margin: 7px 0 0; height: 28px; font-size: 25px; line-height: 28px; font-weight: 400; letter-spacing: 1.6px; color: #26303c; }
  .lower { height: 82px; padding: 12px 0 0 11px; }
  .lower .wide { padding-left: 351px; }
  .task-bar { margin: 0 1px 2px 0; }
  .task-bar .thumb { width: 462px; }

  .right { flex: 1; min-width: 0; margin-left: 8px; display: flex; flex-direction: column; }
  .gfx { height: 802px; display: grid; grid-template: 737px 65px / 1273px 62px; flex: none; }
  .view { grid-row: 1 / 3; grid-column: 1; display: flex; flex-direction: column; }
  .doc-tabs { height: 53px; display: flex; flex: none; font-size: 26px; color: #26303c; white-space: nowrap; }
  .doc { flex: 1; display: flex; align-items: center; justify-content: space-between; padding: 0 17px 4px 10px; letter-spacing: 0.8px; }
  .doc span { margin-left: 2px; }
  .doc.on { flex: none; width: 831px; background: #cbd2e3; justify-content: flex-end; gap: 9px; padding-right: 17px; letter-spacing: 1.3px; }
  .canvas { display: block; flex: none; }
  .selected { flex: 1; display: flex; justify-content: flex-end; padding: 15px 340px 0 0; letter-spacing: 1.15px; }
  .side { grid-row: 1; grid-column: 2; display: flex; flex-direction: column; padding: 2px 0 0 8px; gap: 8px; }
  .grip { width: 34px; height: 8px; margin: 0 0 2px 9px; background: radial-gradient(circle, #aaa 1px, transparent 1.5px) 0 0 / 6px 6px; flex: none; }
  .side-btn + .grip { margin-top: 1px; margin-bottom: 2px; }
  .side-btn { width: 46px; height: 46px; border: 2px solid #92a2b2; border-radius: 8px; display: grid; place-content: center; background: #fdfdfd; flex: none; }
  .split { width: 46px; height: 10px; border: 2px solid #92a2b2; background: linear-gradient(90deg, transparent 20px, #92a2b2 20px 22px, transparent 22px); flex: none; }
  .split.gap { margin-top: 30px; }
  .all { grid-column: 1 / 3; grid-row: 2; width: 392px; justify-self: end; margin: 9px 4px 0 0; }

  .console { flex: 1; background: #bec4cd; display: flex; flex-direction: column; }
  .console-head { height: 48px; display: flex; align-items: center; justify-content: space-between; padding: 0 4px 2px 17px; font-size: 26px; color: #53627a; letter-spacing: 1.2px; }
  .console-body { position: relative; height: 289px; display: flex; background: #f7f7f7; border: 1px solid #b9c2cf; border-top: 0; border-radius: 8px 0 8px 8px; overflow: hidden; margin-right: 1px; }
  pre { margin: -11px 0 0; padding-left: 14px; flex: 1; font: 25px/30px 'Liberation Mono', 'Courier New', monospace; letter-spacing: 0.6px; color: #111; }
  .badges { position: absolute; right: 31px; top: 0; display: flex; gap: 11px; }
  .badges span { width: 43px; height: 34px; border: 2px solid #b5b5b5; border-top: 0; border-radius: 0 0 5px 5px; background: #fff; display: grid; place-content: center; }
  .console-side { width: 30px; display: flex; flex-direction: column; }
  .console-side .t1 { height: 138px; } .console-side .thumb { height: 40px; }
  .console-side .cb { margin: 4px 0 0 5px; }

  .dialog { position: absolute; left: 145px; top: 229px; width: 1194px; height: 945px; border: 1px solid #a2a5a8; border-radius: 12px; background: #fdfdfd; box-shadow: 0 14px 60px rgba(0, 0, 0, 0.5); overflow: hidden; }
  .dialog-title { height: 43px; background: #eef3fb; display: flex; align-items: center; padding: 0 16px 2px 11px; font: 17.5px/40px 'Noto Sans', sans-serif; letter-spacing: -0.3px; }
  .dialog-title span { flex: 1; margin-left: 6px; }
  .dialog-body { padding: 0 8px; display: flex; flex-direction: column; }
  .lbl { display: block; white-space: nowrap; }
  .head { color: #26303c; -webkit-text-stroke: 0.2px #26303c; }
  .name { margin: 6px 0 3px 1px; letter-spacing: 1.05px; }
  .field { height: 36px; border: 2px solid #b8c4d4; border-radius: 7px; line-height: 32px; padding-left: 10px; background: #fdfdfd; flex: none; }
  .name-field { width: 1176px; height: 35px; letter-spacing: 1.9px; }
  .split-cols { display: flex; gap: 8px; height: 713px; }
  .left { width: 352px; display: flex; flex-direction: column; flex: none; }
  .opt { height: 34px; padding-top: 6px; flex: none; letter-spacing: 1.6px; }
  .optbox { height: 200px; border: 2px solid #cdd5e4; padding: 4px 0 0 16px; margin-top: 2px; flex: none; }
  .check { height: 36px; display: flex; align-items: center; gap: 8px; letter-spacing: 1px; }
  .cb { width: 20px; height: 20px; border: 2px solid #bdbdbd; background: #fff; display: grid; place-content: center; flex: none; }
  .check.off .cb { background: #efefef; }
  .mid { margin: 6px 0 6px; }
  .combo { height: 46px; border: 2px solid #b8c4d4; border-radius: 8px; background: #fdfdfd; display: flex; align-items: center; justify-content: space-between; padding: 0 14px 0 10px; flex: none; }
  .pair { display: flex; margin-top: 6px; }
  .pair .lbl { width: 177px; }
  .inputs { align-items: center; justify-content: space-between; margin-top: 2px; }
  .inputs .field { width: 168px; }
  .spin { width: 176px; height: 46px; border: 2px solid #b8c4d4; border-radius: 8px; display: flex; align-items: center; justify-content: space-between; padding: 0 5px 0 10px; }
  button { height: 54px; border: 2px solid #4e5d6e; border-radius: 8px; background: #fdfdfd; color: #4b5a6b; font: inherit; letter-spacing: 1.3px; padding: 0; white-space: nowrap; flex: none; }
  .left button { margin: 0 0 12px 2px; }
  .inputs + button { margin-top: 10px; }
  .b1 { width: 232px; letter-spacing: 1.8px; } .b2 { width: 244px; letter-spacing: 1.75px; } .b3 { width: 272px; letter-spacing: 1.8px; }
  .rightcol { flex: 1; display: flex; flex-direction: column; }
  .vo { height: 42px; padding-top: 6px; flex: none; letter-spacing: 1.3px; }
  .mid2 { margin: 6px 0 6px; letter-spacing: 1.1px; }
  .group-combo :global(.combo) { letter-spacing: 1.4px; }
  .inset { margin-top: 12px; }
  .inset :global(.combo) { padding-left: 20px; letter-spacing: 1.05px; }
  .minmax { display: flex; gap: 8px; margin-top: 6px; color: #8c8c8c; letter-spacing: 2.2px; }
  .minmax span, .dis { width: 336px; }
  .fields { margin-top: 6px; letter-spacing: 1.3px; }
  .dis { background: #ebebeb; border-color: #bdbdbd; }
  .surf { display: flex; align-items: center; margin-top: 16px; }
  .surf .lbl { width: 117px; }
  .ph { width: 427px; color: #8f8f8f; margin-right: -2px; }
  .sel-btn { position: relative; width: 56px; height: 56px; margin-left: 12px; border: 2px solid #4e5d6e; border-radius: 8px; padding: 8px 0 0 7px; flex: none; background: #fdfdfd; }
  .tick { position: absolute; right: 4px; bottom: 7px; }
  .list { height: 204px; margin-top: 6px; border: 4px solid #dddddd; border-radius: 6px; background: #fff; font: 24px/37px 'Noto Sans', sans-serif; letter-spacing: 0.4px; flex: none; }
  .list div { height: 36px; background: #8fa4b9; padding-left: 6px; color: #000; }
  .ds { margin-top: 6px; height: 28px; letter-spacing: 1.6px; }
  .dsbox { width: 808px; height: 79px; border: 2px solid #cdd5e4; display: flex; align-items: center; padding-left: 8px; }
  .dsbox :global(.combo) { width: 420px; margin-right: 10px; letter-spacing: 1px; }
  .dsbox button { width: 150px; }
  .dsbox .ns { position: relative; width: 194px; margin-left: 12px; padding-right: 18px; }
  .actions { height: 82px; border-top: 1px solid #a8a8a8; display: flex; justify-content: center; gap: 16px; padding-top: 27px; margin-top: 1px; }
  .primary { width: 200px; background: #525e6c; color: #fff; border-color: #3e4a58; }
  .w2 { width: 150px; } .w3 { width: 108px; } .w4 { width: 94px; }
  .resize { position: absolute; right: 0; bottom: 0; }
</style>
